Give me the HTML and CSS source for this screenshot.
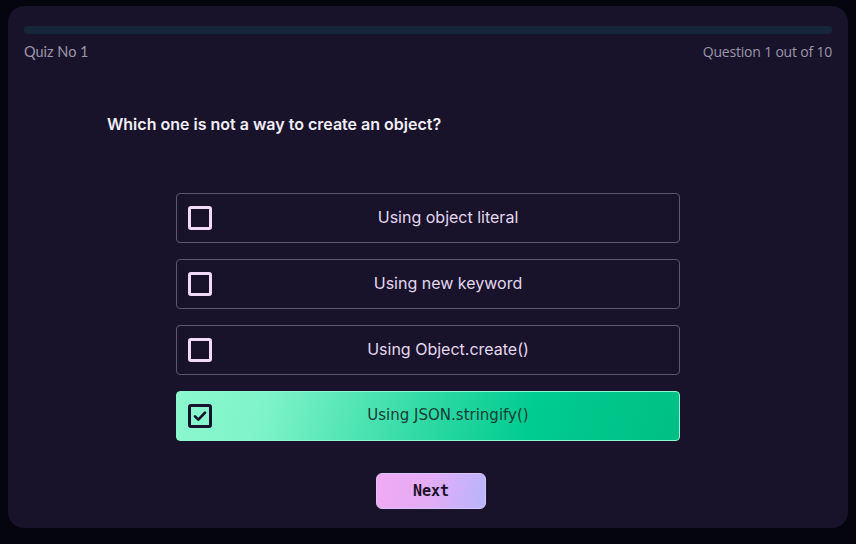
FILE: index.html
```html
<!DOCTYPE html>
<html lang="en">
<head>
<meta charset="utf-8">
<title>Quiz</title>
<link rel="stylesheet" href="styles.css">
</head>
<body>
<main class="card">
  <div class="progress"><div class="progress-fill"></div></div>
  <div class="meta">
    <span class="quiz-no">Quiz No 1</span>
    <span class="count">Question 1 out of 10</span>
  </div>
  <h1 class="question">Which one is not a way to create an object?</h1>
  <ul class="options">
    <li class="option"><span class="box"></span><span class="label">Using object literal</span></li>
    <li class="option"><span class="box"></span><span class="label">Using new keyword</span></li>
    <li class="option"><span class="box"></span><span class="label">Using Object.create()</span></li>
    <li class="option selected"><span class="box"><svg viewBox="0 0 24 24" width="16" height="16"><path d="M4.5 12.5l5 5L19.5 7" fill="none" stroke="#18122b" stroke-width="4" stroke-linecap="round" stroke-linejoin="round"/></svg></span><span class="label">Using JSON.stringify()</span></li>
  </ul>
  <div class="actions"><button class="next">Next</button></div>
</main>
</body>
</html>
```
FILE: styles.css
```css
* { box-sizing: border-box; }
html, body { margin: 0; padding: 0; }
body {
  background: #05050f;
  width: 856px;
  height: 544px;
  padding: 6px 8px 16px 8px;
  font-family: "Inter", "Liberation Sans", sans-serif;
}
.card {
  background: #18122b;
  border-radius: 16px;
  height: 522px;
  padding: 20px 16px 0 16px;
}
.progress {
  height: 8px;
  border-radius: 4px;
  background: #16263a;
}
.progress-fill { width: 0; height: 100%; }
.meta {
  display: flex;
  justify-content: space-between;
  margin-top: 8px;
  line-height: 20px;
  font-size: 14px;
  color: #9b97a8;
}
.quiz-no { font-family: "Lato", "Liberation Sans", sans-serif; font-size: 14.5px; }
.count { font-family: "Open Sans", "Lato", sans-serif; font-size: 14px; letter-spacing: -0.2px; }
.question {
  margin: 50px 0 0 83px;
  font-size: 16px;
  line-height: 24px;
  font-weight: 600;
  color: #f2eef8;
}
.options {
  list-style: none;
  margin: 57px auto 0 auto;
  padding: 0;
  width: 504px;
  display: flex;
  flex-direction: column;
  gap: 16px;
}
.option {
  height: 50px;
  border: 1px solid #5d5672;
  border-radius: 4px;
  display: flex;
  align-items: center;
  padding: 0 11px;
}
.box {
  width: 24px;
  height: 24px;
  border: 3px solid #f1dcf7;
  border-radius: 3px;
  display: flex;
  align-items: center;
  justify-content: center;
  flex: none;
}
.label {
  flex: 1;
  text-align: center;
  font-size: 16px;
  line-height: 20px;
  margin-top: -2px;
  color: #e4d8f0;
  padding-left: 16px;
}
.option.selected {
  border: 1px solid #8ff5cc;
  background: linear-gradient(105deg, #8cf8cf 0%, #7ef3c9 18%, #2ed9a3 50%, #00cc8f 70%, #00bf84 100%);
}
.option.selected .box { border-color: #18122b; }
.option.selected .label { color: #1b3b36; font-family: "DejaVu Sans", "Inter", sans-serif; font-size: 15px; }
.actions {
  display: flex;
  justify-content: center;
  margin-top: 32px;
  padding-left: 6px;
}
.next {
  width: 110px;
  height: 36px;
  border: 1px solid #d9c6fb;
  border-radius: 6px;
  background: linear-gradient(100deg, #f2a9f3 0%, #e3acf6 50%, #b8b5fb 100%);
  font-family: "DejaVu Sans Mono", "Liberation Mono", monospace;
  font-weight: bold;
  font-size: 15px;
  color: #1a1228;
  cursor: pointer;
}
```
